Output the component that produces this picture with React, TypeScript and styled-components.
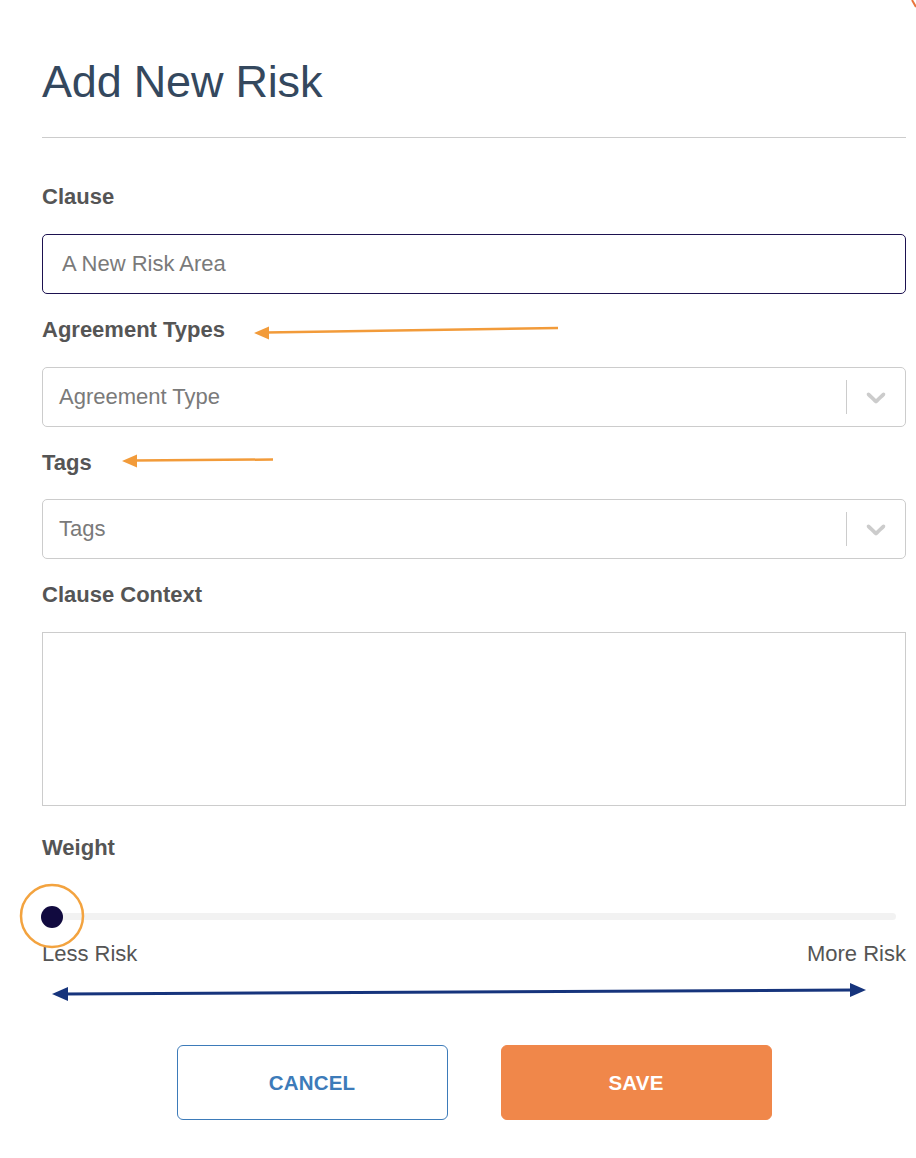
import React from "react";
import styled, { createGlobalStyle } from "styled-components";

const GlobalStyle = createGlobalStyle`
  html, body {
    margin: 0;
    padding: 0;
    background: #ffffff;
  }
  body {
    font-family: "Liberation Sans", Arial, Helvetica, sans-serif;
  }
  * { box-sizing: border-box; }
`;

const Page = styled.div`
  position: relative;
  width: 916px;
  min-height: 1158px;
  padding: 55px 10px 0 42px;
  background: #fff;
`;

const Title = styled.h1`
  margin: 0;
  font-size: 45px;
  line-height: 54px;
  font-weight: 400;
  color: #34485e;
  letter-spacing: -0.2px;
`;

const Divider = styled.hr`
  margin: 28px 0 0;
  border: 0;
  height: 1px;
  background: #cccccc;
`;

const Label = styled.div<{ $top?: number; $bottom?: number }>`
  margin-top: ${(p) => p.$top ?? 24}px;
  margin-bottom: ${(p) => p.$bottom ?? 25}px;
  font-size: 22px;
  line-height: 24px;
  font-weight: 700;
  color: #555555;
`;

const TextInput = styled.input`
  display: block;
  width: 100%;
  height: 60px;
  padding: 0 19px;
  border: 1px solid #1d1250;
  border-radius: 5px;
  font-family: inherit;
  font-size: 22px;
  color: #333;
  outline: none;
  &::placeholder {
    color: #7a7a7a;
  }
`;

const SelectBox = styled.div`
  display: flex;
  align-items: center;
  height: 60px;
  border: 1px solid #cccccc;
  border-radius: 5px;
  background: #fff;
`;

const SelectValue = styled.span`
  flex: 1;
  padding-left: 16px;
  font-size: 22px;
  color: #7a7a7a;
`;

const Separator = styled.span`
  width: 1px;
  align-self: stretch;
  margin: 12px 0;
  background: #cccccc;
`;

const Indicator = styled.span`
  display: flex;
  align-items: center;
  justify-content: center;
  width: 58px;
  color: #cccccc;
`;

const TextArea = styled.textarea`
  display: block;
  width: 100%;
  height: 174px;
  border: 1px solid #cccccc;
  border-radius: 0;
  resize: none;
  font-family: inherit;
  font-size: 22px;
  outline: none;
`;

const SliderWrap = styled.div`
  position: relative;
  height: 40px;
  margin: 36px 10px 0 0;
  display: flex;
  align-items: center;
`;

const Track = styled.div`
  flex: 1;
  height: 7px;
  border-radius: 4px;
  background: #f2f2f2;
`;

const Thumb = styled.div`
  position: absolute;
  left: -1px;
  top: 50%;
  width: 22px;
  height: 22px;
  margin-top: -10px;
  border-radius: 50%;
  background: #110a3f;
`;

const RangeLabels = styled.div`
  display: flex;
  justify-content: space-between;
  margin-top: 6px;
  font-size: 22px;
  line-height: 24px;
  color: #555555;
`;

const ButtonRow = styled.div`
  display: flex;
  justify-content: center;
  gap: 53px;
  margin-top: 79px;
`;

const Button = styled.button<{ $primary?: boolean }>`
  width: 271px;
  height: 75px;
  border-radius: 6px;
  border: 1px solid ${(p) => (p.$primary ? "#f0874a" : "#3d7bb9")};
  background: ${(p) => (p.$primary ? "#f0874a" : "#ffffff")};
  color: ${(p) => (p.$primary ? "#ffffff" : "#3d7bb9")};
  font-family: inherit;
  font-size: 20.5px;
  font-weight: 700;
  letter-spacing: 0.2px;
  cursor: pointer;
`;

const Overlay = styled.svg`
  position: absolute;
  top: 0;
  left: 0;
  width: 916px;
  height: 1158px;
  pointer-events: none;
`;

const Chevron = () => (
  <svg width="32" height="32" viewBox="0 0 20 20" fill="currentColor" aria-hidden="true">
    <path d="M4.516 7.548c0.436-0.446 1.043-0.481 1.576 0l3.908 3.747 3.908-3.747c0.533-0.481 1.141-0.446 1.574 0 0.436 0.445 0.408 1.197 0 1.615-0.406 0.418-4.695 4.502-4.695 4.502-0.217 0.223-0.502 0.335-0.787 0.335s-0.57-0.112-0.789-0.335c0 0-4.287-4.084-4.695-4.502s-0.436-1.17 0-1.615z" />
  </svg>
);

const Select = ({ placeholder }: { placeholder: string }) => (
  <SelectBox>
    <SelectValue>{placeholder}</SelectValue>
    <Separator />
    <Indicator>
      <Chevron />
    </Indicator>
  </SelectBox>
);

const Annotations = () => (
  <Overlay viewBox="0 0 916 1158">
    <line x1="558" y1="328" x2="266" y2="332.5" stroke="#f29b3a" strokeWidth="2.5" />
    <polygon points="254,333 269,326.5 269,339.5" fill="#f29b3a" />
    <line x1="273" y1="459.5" x2="134" y2="460.5" stroke="#f29b3a" strokeWidth="2.5" />
    <polygon points="122,461 137,454.5 137,467.5" fill="#f29b3a" />
    <circle cx="52" cy="916" r="31" fill="none" stroke="#f3a33f" strokeWidth="2.5" />
    <line x1="64" y1="994" x2="854" y2="990" stroke="#16347c" strokeWidth="3" />
    <polygon points="52,994 68,987 68,1001" fill="#16347c" />
    <polygon points="866,990 850,983 850,997" fill="#16347c" />
    <line x1="912" y1="0" x2="916" y2="7" stroke="#e8743b" strokeWidth="2" />
  </Overlay>
);

export default function App() {
  return (
    <>
      <GlobalStyle />
      <Page>
        <Title>Add New Risk</Title>
        <Divider />
        <Label $top={47}>Clause</Label>
        <TextInput placeholder="A New Risk Area" />
        <Label>Agreement Types</Label>
        <Select placeholder="Agreement Type" />
        <Label $bottom={24}>Tags</Label>
        <Select placeholder="Tags" />
        <Label>Clause Context</Label>
        <TextArea />
        <Label $top={30} $bottom={0}>Weight</Label>
        <SliderWrap>
          <Track />
          <Thumb />
        </SliderWrap>
        <RangeLabels>
          <span>Less Risk</span>
          <span>More Risk</span>
        </RangeLabels>
        <ButtonRow>
          <Button>CANCEL</Button>
          <Button $primary>SAVE</Button>
        </ButtonRow>
        <Annotations />
      </Page>
    </>
  );
}
